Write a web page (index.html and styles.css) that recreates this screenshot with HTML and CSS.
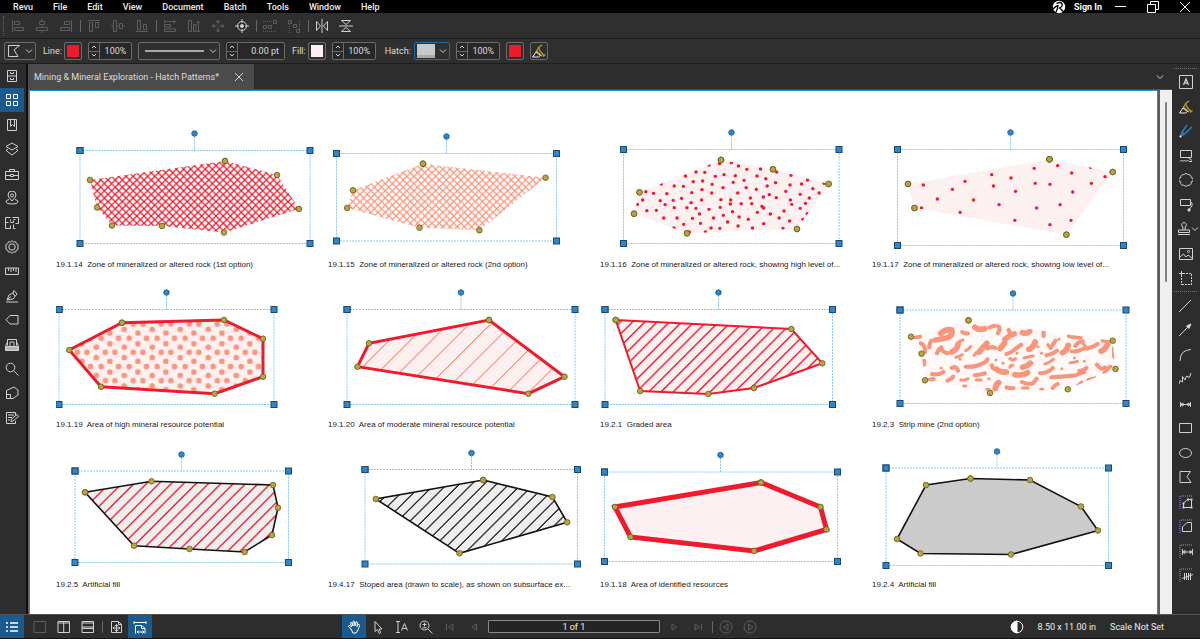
FILE: index.html
```html
<!DOCTYPE html>
<html lang="en">
<head>
<meta charset="utf-8">
<title>Mining &amp; Mineral Exploration - Hatch Patterns</title>
<link rel="stylesheet" href="styles.css">
</head>
<body>
<div class="app">
  <header class="titlebar">
    <nav class="menu">
      <button>Revu</button><button>File</button><button>Edit</button><button>View</button><button>Document</button><button>Batch</button><button>Tools</button><button>Window</button><button>Help</button>
    </nav>
    <div class="account">
      <svg class="logo" viewBox="0 0 14 14"><circle cx="7" cy="7" r="6.200" fill="#fff"/><path d="M3.500 13Q5.500 10 6 5.500Q4 6 1 9M4.500 3.500Q8 1.500 10 3.500Q11 6.500 7.500 8Q9 9 11.500 12" fill="none" stroke="#000" stroke-width="1.300"/></svg>
      <button class="signin">Sign In</button>
    </div>
    <div class="window-buttons">
      <button aria-label="Minimize"><svg class="icon" viewBox="0 0 14 14"><path d="M1 6.500H12"/></svg></button>
      <button aria-label="Restore"><svg class="icon" viewBox="0 0 14 14"><path d="M1.500 4.500h8v8h-8zM4.500 4.500v-3h8v8h-3"/></svg></button>
      <button aria-label="Close"><svg class="icon" viewBox="0 0 14 14"><path d="M2 2l10 10M12 2L2 12"/></svg></button>
    </div>
  </header>

  <div class="toolbar align-bar">
    <span class="grip"></span>
    <button class="tool dim" aria-label="Align left"><svg class="icon" viewBox="0 0 14 14"><path d="M1.500 1v12M3.500 2.500h5v3h-5zM3.500 8.500h9v3h-9z"/></svg></button>
    <button class="tool dim" aria-label="Align center"><svg class="icon" viewBox="0 0 14 14"><path d="M7 0v2.500M7 5.500v3M7 11.500V14M4.500 2.500h5v3h-5zM1.500 8.500h11v3h-11z"/></svg></button>
    <button class="tool dim" aria-label="Align right"><svg class="icon" viewBox="0 0 14 14"><path d="M12.500 1v12M5.500 2.500h5v3h-5zM1.500 8.500h9v3h-9z"/></svg></button>
    <span class="sep"></span>
    <button class="tool dim" aria-label="Align top"><svg class="icon" viewBox="0 0 14 14"><path d="M1 1.500h12M2.500 3.500h3v9h-3zM8.500 3.500h3v5h-3z"/></svg></button>
    <button class="tool dim" aria-label="Align middle"><svg class="icon" viewBox="0 0 14 14"><path d="M0 7h2.500M5.500 7h3M11.500 7H14M2.500 1.500h3v11h-3zM8.500 4.500h3v5h-3z"/></svg></button>
    <button class="tool dim" aria-label="Align bottom"><svg class="icon" viewBox="0 0 14 14"><path d="M1 12.500h12M2.500 1.500h3v9h-3zM8.500 5.500h3v5h-3z"/></svg></button>
    <span class="sep"></span>
    <button class="tool dim" aria-label="Match width"><svg class="icon" viewBox="0 0 14 14"><path d="M1.500 1v3M1.500 2.500h11M10.500 .500l2 2-2 2M1.500 5.500h6v2.500h-6zM1.500 10h11v2.500h-11z"/></svg></button>
    <button class="tool dim" aria-label="Match height"><svg class="icon" viewBox="0 0 14 14"><path d="M1.500 1.500h3v11h-3zM6.500 5.500h2.500v7h-2.500zM11.500 2v10.500M9.500 4l2-2 2 2M10 12.500h3"/></svg></button>
    <button class="tool dim" aria-label="Match size"><svg class="icon" viewBox="0 0 14 14"><path d="M7 1v4.500M7 8.500V13M1 7h4.500M8.500 7H13M5.500 3L7 1l1.500 2zM5.500 11L7 13l1.500-2zM3 5.500L1 7l2 1.500zM11 5.500L13 7l-2 1.500z"/></svg></button>
    <button class="tool" aria-label="Center in document"><svg class="icon" viewBox="0 0 14 14"><circle cx="7" cy="7" r="4.500"/><circle cx="7" cy="7" r="1.500" fill="#d0d0d0"/><path d="M7 0v4M7 10v4M0 7h4M10 7h4"/></svg></button>
    <span class="sep"></span>
    <button class="tool dim" aria-label="Distribute horizontally"><svg class="icon" viewBox="0 0 14 14"><path d="M0 2.500h9M0 12.500h14" stroke-dasharray="1 1"/><path d="M.5 6.500h3v3h-3zM5.500 6.500h3v3h-3zM10.500 1.500h3v3h-3z"/></svg></button>
    <button class="tool dim" aria-label="Distribute vertically"><svg class="icon" viewBox="0 0 14 14"><path d="M2.500 5v9M12.500 1v9" stroke-dasharray="1 1"/><path d="M1.500 1.500h3v3h-3zM6.500 5.500h3v3h-3zM9.500 10.500h3v3h-3z"/></svg></button>
    <span class="sep"></span>
    <button class="tool" aria-label="Flip horizontal"><svg class="icon" viewBox="0 0 14 14"><path d="M7 0v14M1.500 2.500L5.500 7l-4 4.500zM12.500 2.500L8.500 7l4 4.500z"/></svg></button>
    <button class="tool" aria-label="Flip vertical"><svg class="icon" viewBox="0 0 14 14"><path d="M0 7h14M2.500 1.500h9L7 5.500zM2.500 12.500h9L7 8.500z"/></svg></button>
  </div>

  <div class="toolbar props-bar">
    <button class="box shape-picker" aria-label="Shape" aria-haspopup="listbox"><svg class="icon" viewBox="0 0 14 14"><path d="M1.500 1.500h11L7 6l4 6.500H1.500z"/></svg><svg class="chev" viewBox="0 0 8 8"><path d="M1 2.500l3 3 3-3"/></svg></button>
    <div class="field"><span>Line:</span><button class="box swatch" aria-label="Line colour"><i class="red"></i></button></div>
    <div class="box spinner"><span class="steps"><button aria-label="Increase line opacity"><svg viewBox="0 0 8 8"><path d="M2 5l2-2 2 2"/></svg></button><button aria-label="Decrease line opacity"><svg viewBox="0 0 8 8"><path d="M2 3l2 2 2-2"/></svg></button></span><input aria-label="Line opacity" value="100%"></div>
    <div class="box line-style"><select aria-label="Line style"><option label=" " value="solid"></option></select><span class="rule"></span><svg class="chev" viewBox="0 0 8 8"><path d="M1 2.500l3 3 3-3"/></svg></div>
    <div class="box spinner wide"><span class="steps"><button aria-label="Increase width"><svg viewBox="0 0 8 8"><path d="M2 5l2-2 2 2"/></svg></button><button aria-label="Decrease width"><svg viewBox="0 0 8 8"><path d="M2 3l2 2 2-2"/></svg></button></span><input aria-label="Line width" value="0.00 pt"></div>
    <div class="field"><span>Fill:</span><button class="box swatch" aria-label="Fill colour"><i class="blush"></i></button></div>
    <div class="box spinner"><span class="steps"><button aria-label="Increase fill opacity"><svg viewBox="0 0 8 8"><path d="M2 5l2-2 2 2"/></svg></button><button aria-label="Decrease fill opacity"><svg viewBox="0 0 8 8"><path d="M2 3l2 2 2-2"/></svg></button></span><input aria-label="Fill opacity" value="100%"></div>
    <div class="field hatch-field"><span>Hatch:</span><button class="box hatch-picker" aria-label="Hatch pattern" aria-haspopup="listbox"><i></i><svg class="chev" viewBox="0 0 8 8"><path d="M1 2.500l3 3 3-3"/></svg></button></div>
    <div class="box spinner"><span class="steps"><button aria-label="Increase hatch opacity"><svg viewBox="0 0 8 8"><path d="M2 5l2-2 2 2"/></svg></button><button aria-label="Decrease hatch opacity"><svg viewBox="0 0 8 8"><path d="M2 3l2 2 2-2"/></svg></button></span><input aria-label="Hatch opacity" value="100%"></div>
    <button class="box swatch" aria-label="Hatch colour"><i class="red"></i></button>
    <button class="box swatch" aria-label="Highlight"><svg class="icon" viewBox="0 0 14 14"><path class="gold" d="M10 1L6.500 3.500 8 7l4 4.500M4 6.500l6 5.500M11 12.500l2.500-2M6.500 4L4 8"/><path class="pale" d="M4 8L.5 13h6l2-1.500z"/></svg></button>
  </div>

  <div class="workspace">
    <aside class="panels">
      <div class="strip panel-strip">
        <button class="tool" aria-label="File access"><svg class="icon" viewBox="0 0 14 14"><path d="M2.500 1.500h9v11h-9zM2.500 7h9M5.500 3v1.500h3V3M5.500 9v1.500h3V9"/></svg></button>
        <button class="tool active" aria-label="Thumbnails"><svg class="icon" viewBox="0 0 14 14"><path d="M1.500 1.500h4v4h-4zM8.500 1.500h4v4h-4zM1.500 8.500h4v4h-4zM8.500 8.500h4v4h-4z"/></svg></button>
        <button class="tool" aria-label="Bookmarks"><svg class="icon" viewBox="0 0 14 14"><path d="M2.500 1.500h9v11h-9zM5.500 1.500v7l2-2 2 2v-7"/></svg></button>
        <button class="tool" aria-label="Layers"><svg class="icon" viewBox="0 0 14 14"><path d="M7 1l6 3.500L7 8 1 4.500zM3 7L1 8.500 7 13l6-4.500L11 7"/></svg></button>
        <button class="tool" aria-label="Tool chest"><svg class="icon" viewBox="0 0 14 14"><path d="M.500 4.500h13v8H.500zM.500 8.500h5M8.500 8.500h5M5.500 7.500h3v2h-3zM4.500 4.500v-2h5v2"/></svg></button>
        <button class="tool" aria-label="Places"><svg class="icon" viewBox="0 0 14 14"><path d="M7 10Q3 6 3 4a4 4 0 0 1 8 0Q11 6 7 10zM4 8.500Q1 9 1 11q0 2 6 2t6-2q0-2-3-2.500"/><circle cx="7" cy="4.500" r="1.500"/></svg></button>
        <button class="tool" aria-label="Spaces"><svg class="icon" viewBox="0 0 14 14"><path d="M5.500 5.500v-2M5.500 1.500h-5v11h5v-3M.500 6.500h3M5.500 6.500h3v-2M7.500 1.500h6v6h-3M8.500 8.500v4h2M10.500 3.500h-2"/></svg></button>
        <button class="tool" aria-label="Properties"><svg class="icon" viewBox="0 0 14 14"><path d="M7 .7l1.600 1.300 2-.2.8 1.900 1.700 1L13 7l.1 2.200-1.700 1-.8 1.900-2-.1L7 13.300 5.400 12l-2 .1-.8-1.900-1.700-1L1 7 .9 4.700l1.700-1 .8-1.900 2 .2z"/><circle cx="7" cy="7" r="3.200"/></svg></button>
        <button class="tool" aria-label="Measurements"><svg class="icon" viewBox="0 0 14 14"><path d="M.5 4h13v6.500H.5zM3.500 4v3M6 4v4M8.500 4v3M11 4v4"/></svg></button>
        <button class="tool" aria-label="Signatures"><svg class="icon" viewBox="0 0 14 14"><path d="M1 13h12M2 11l2-5 4-2 2 3.500L8 10zM2 11l4-3.500M8 4l1-2.500L12 5l-2 2.500"/></svg></button>
        <button class="tool" aria-label="Flags"><svg class="icon" viewBox="0 0 14 14"><path d="M5 2.500h8v8.500H5L1 6.800z"/></svg></button>
        <button class="tool" aria-label="Studio"><svg class="icon" viewBox="0 0 14 14"><path d="M2.500 7.500v-6h9v6M.500 8.500h13v4H.500zM.500 8l2-4M13.500 8l-2-4M5 8V4h4v4"/><path d="M1 9h12v3H1z" fill="#aaa"/></svg></button>
        <button class="tool" aria-label="Search"><svg class="icon" viewBox="0 0 14 14"><circle cx="5.500" cy="5.500" r="4.300"/><path d="M8.700 8.700L13.500 13.500"/></svg></button>
        <button class="tool" aria-label="Sketch"><svg class="icon" viewBox="0 0 14 14"><path d="M1.500 4.500L9 1l4 3v5l-5 3.500H1.500zM1.500 8.500h4v4"/></svg></button>
        <button class="tool" aria-label="Markups"><svg class="icon" viewBox="0 0 14 14"><path d="M10.500 4V1.500h-9v11h9V10M3 4h6M3 6.500h4M3 9h2M6 10.500l.5-2.500 5.500-4.500 1.500 2L8 10z"/></svg></button>
      </div>
    </aside>

    <main class="document">
      <div class="tabs">
        <div class="tab"><button class="tab-name">Mining &amp; Mineral Exploration - Hatch Patterns*</button><button class="tab-close" aria-label="Close tab"><svg class="icon" viewBox="0 0 14 14"><path d="M3 3l8 8M11 3l-8 8"/></svg></button></div>
        <button class="tab-more" aria-label="More tabs"><svg class="chev" viewBox="0 0 8 8"><path d="M1 2.500l3 3 3-3"/></svg></button>
      </div>
      <div class="viewer">
        <div class="page">
          <svg class="defs" aria-hidden="true">
            <defs>
              <marker id="corner" markerUnits="userSpaceOnUse" markerWidth="8" markerHeight="8" refX="4" refY="4" viewBox="0 0 8 8"><rect x="1" y="1" width="6" height="6" fill="#2f86c9" stroke="#1b4870"/></marker>
              <marker id="turn" markerUnits="userSpaceOnUse" markerWidth="8" markerHeight="8" refX="4" refY="4" viewBox="0 0 8 8"><circle cx="4" cy="4" r="2.800" fill="#2f86c9" stroke="#225a8a" stroke-width=".8"/></marker>
              <marker id="vertex" markerUnits="userSpaceOnUse" markerWidth="8" markerHeight="8" refX="4" refY="4" viewBox="0 0 8 8"><circle cx="4" cy="4" r="2.800" fill="#b5a642" stroke="#6d6425" stroke-width=".9"/></marker>
              <pattern id="cross-red" x="0" y="0" width="7.200" height="7.200" patternUnits="userSpaceOnUse"><path d="M-1-1l9.200 9.200M-1 8.200L8.200-1" stroke="#ee1b2d" stroke-width="1.300"/></pattern>
              <pattern id="cross-salmon" x="0" y="0" width="7.200" height="7.200" patternUnits="userSpaceOnUse"><path d="M-1-1l9.200 9.200M-1 8.200L8.200-1" stroke="#f8957d" stroke-width="1.300"/></pattern>
              <pattern id="rings" x="130.300" y="321" width="28" height="28.300" patternUnits="userSpaceOnUse"><path d="M3 3h0M12.600 3h0M22 8.300h0M7.600 12h0M16.200 17.300h0M27 17.300h0M-1 17.300h0M7.600 22.700h0M22 26.300h0M22-2h0" stroke="#f8957d" stroke-width="5.600" stroke-linecap="round"/></pattern>
              <pattern id="slant-wide" x="740" y="0" width="21.300" height="40" patternUnits="userSpaceOnUse" patternTransform="skewX(-45)"><rect x="10" width="1.600" height="40" fill="#f8957d"/></pattern>
              <pattern id="slant-red" x="949.500" y="0" width="12.300" height="40" patternUnits="userSpaceOnUse" patternTransform="skewX(-45)"><rect x="5" width="2" height="40" fill="#ee1b2d"/></pattern>
              <pattern id="slant-fill" x="649" y="0" width="12.400" height="40" patternUnits="userSpaceOnUse" patternTransform="skewX(-45)"><rect x="5" width="1.900" height="40" fill="#ee1b2d"/></pattern>
              <pattern id="slant-black" x="975" y="0" width="12.400" height="40" patternUnits="userSpaceOnUse" patternTransform="skewX(-45)"><rect x="5" width="1.600" height="40" fill="#111"/></pattern>
              <clipPath id="clip-high"><path d="M722 160L774 169.300 829.600 184 798 229 688 233.300 635 213.700 640.500 192.300z"/></clipPath>
              <clipPath id="clip-low"><path d="M1050.500 159.300L1113.700 172 1067.400 234.700 915.500 208 909 184z"/></clipPath>
              <clipPath id="clip-strip"><path d="M969.500 320.300L1113.700 340.700 1116.500 369 1068.800 389.300 991 393 926 380.300 922.500 353.700 912 336.700z"/></clipPath>
            </defs>
          </svg>
          <div class="sheet">
            <figure>
              <svg viewBox="56 120 272 134">
                <path class="area" fill="url(#cross-red)" d="M225 161L277 175 299 209 224 232.500 162 226 112 225.500 97 207.500 90 180z"/>
                <path class="stem" d="M194.500 133.500V150.500"/><path class="frame" d="M80 150.500H310V243.500H80z"/>
              </svg>
              <figcaption>19.1.14&nbsp; Zone of mineralized or altered rock (1st option)</figcaption>
            </figure>
            <figure>
              <svg viewBox="328 120 272 134">
                <path class="area" fill="url(#cross-salmon)" d="M423 163.700L545.600 177.700 479.400 230.300 419.500 227.700 347.200 208 353 190.300z"/>
                <path class="stem" d="M446.500 136.500V153.500"/><path class="frame" d="M336.500 153.500H556.500V241H336.500z"/>
              </svg>
              <figcaption>19.1.15&nbsp; Zone of mineralized or altered rock (2nd option)</figcaption>
            </figure>
            <figure>
              <svg viewBox="601 120 272 134">
                <path class="area blush" d="M722 160L774 169.300 829.600 184 798 229 688 233.300 635 213.700 640.500 192.300z"/>
                <g clip-path="url(#clip-high)"><path class="dots" transform="translate(590 120) scale(.3508 .3333)" d="M342 135h0M372 131h0M406 128h0M426 138h0M450 148h0M489 147h0M535 156h0M576 166h0M305 156h0M330 157h0M275 168h0M360 169h0M385 164h0M417 167h0M479 168h0M504 176h0M532 188h0M573 195h0M606 192h0M623 180h0M670 190h0M638 206h0M656 219h0M206 192h0M243 198h0M269 199h0M297 185h0M324 183h0M351 193h0M382 203h0M411 187h0M442 181h0M448 203h0M477 208h0M508 198h0M561 214h0M162 215h0M184 220h0M222 221h0M293 218h0M322 209h0M350 219h0M424 219h0M514 224h0M534 233h0M497 231h0M602 223h0M628 234h0M574 240h0M153 240h0M203 242h0M240 241h0M264 235h0M291 248h0M321 240h0M376 239h0M404 240h0M460 234h0M138 253h0M217 254h0M243 263h0M279 263h0M305 265h0M342 268h0M374 262h0M403 252h0M434 251h0M464 251h0M493 259h0M498 264h0M578 253h0M617 250h0M602 265h0M165 272h0M192 271h0M315 282h0M409 275h0M383 286h0M480 277h0M517 282h0M556 273h0M542 294h0M213 294h0M251 294h0M295 295h0M355 294h0M428 291h0M454 298h0M572 303h0M610 298h0M622 281h0M270 313h0M318 310h0M395 306h0M425 318h0M498 311h0M242 324h0M348 324h0M373 325h0M466 324h0M553 325h0M332 336h0M286 336h0"/></g>
                <path class="area" d="M722 160L774 169.300 829.600 184 798 229 688 233.300 635 213.700 640.500 192.300z"/>
                <path class="stem" d="M732.500 132.500V149.500"/><path class="frame" d="M624.500 149.500H840V243.500H624.500z"/>
              </svg>
              <figcaption>19.1.16&nbsp; Zone of mineralized or altered rock, showing high level of...</figcaption>
            </figure>
            <figure>
              <svg viewBox="873 120 272 134">
                <path class="area blush" d="M1050.500 159.300L1113.700 172 1067.400 234.700 915.500 208 909 184z"/>
                <g clip-path="url(#clip-low)"><path class="dots" transform="translate(590 120) scale(.3508 .3333)" d="M953 195h0M948 264h0M993 237h0M1036 208h0M1072 184h0M1058 277h0M1096 240h0M1148 164h0M1153 198h0M1203 174h0M1169 254h0M1216 214h0M1214 301h0M1269 145h0M1272 190h0M1314 193h0M1276 264h0M1314 314h0M1336 137h0M1376 159h0M1379 216h0M1343 254h0M1374 301h0M1432 190h0M1430 142h0M1471 170h0"/></g>
                <path class="area" d="M1050.500 159.300L1113.700 172 1067.400 234.700 915.500 208 909 184z"/>
                <path class="stem" d="M1011.500 132.500V149.500"/><path class="frame" d="M898.500 149.500H1124.500V245.500H898.500z"/>
              </svg>
              <figcaption>19.1.17&nbsp; Zone of mineralized or altered rock, showing low level of...</figcaption>
            </figure>

            <figure>
              <svg viewBox="56 280 272 134">
                <path fill="#fdf0f1" d="M122 322.700L224 320 263 338.700 263 376.700 214.600 393.700 101 386.700 69.300 350z"/>
                <path class="area outline-3" fill="url(#rings)" d="M122 322.700L224 320 263 338.700 263 376.700 214.600 393.700 101 386.700 69.300 350z"/>
                <path class="stem" d="M166.500 292.500V309.500"/><path class="frame" d="M59 309.500H274V404.500H59z"/>
              </svg>
              <figcaption>19.1.19&nbsp; Area of high mineral resource potential</figcaption>
            </figure>
            <figure>
              <svg viewBox="328 280 272 134">
                <path fill="#fdf0f1" d="M489 320L564.500 376.700 528.300 393.700 357.500 366.700 369 343.300z"/>
                <path class="area outline-3" fill="url(#slant-wide)" d="M489 320L564.500 376.700 528.300 393.700 357.500 366.700 369 343.300z"/>
                <path class="stem" d="M461 292.500V309.500"/><path class="frame" d="M347 309.500H575V404.500H347z"/>
              </svg>
              <figcaption>19.1.20&nbsp; Area of moderate mineral resource potential</figcaption>
            </figure>
            <figure>
              <svg viewBox="601 280 272 134">
                <path fill="#fdf0f1" d="M616.700 320L792.400 329 823.300 363.300 755 388 709.300 394 641.200 391z"/>
                <path class="area outline-2" fill="url(#slant-red)" d="M616.700 320L792.400 329 823.300 363.300 755 388 709.300 394 641.200 391z"/>
                <path class="stem" d="M719.500 292.500V309.500"/><path class="frame" d="M606 309.500H833.500V404.500H606z"/>
              </svg>
              <figcaption>19.2.1&nbsp; Graded area</figcaption>
            </figure>
            <figure>
              <svg viewBox="873 280 272 134">
                <path fill="#fef8f7" d="M969.500 320.300L1113.700 340.700 1116.500 369 1068.800 389.300 991 393 926 380.300 922.500 353.700 912 336.700z"/>
                <g clip-path="url(#clip-strip)"><g class="blobs" transform="translate(590 280) scale(.3508 .3333)">
                  <path stroke-width="17" d="M1003 160Q1020 145 1034 150Q1038 168 1020 174L988 180M1100 142q12 10 28 4M1112 216l22-26M1186 178q16-14 26-16M1172 206l12-16M1236 158q14 4 20-4M1254 208q14-6 18-22M1350 218q14-8 16-22M1034 216q16-6 18-24M1460 214q12-6 18-20M1158 326q2-14 10-18M1214 284q24 4 36-6M1162 268q12 10 28 8M1236 262q14-4 22-12"/>
                  <path stroke-width="12" d="M930 172l14-2M946 190q12 4 12 26M976 182q-6 8-6 20M992 220q2-10 12-18 0 14 18 18M1064 156q8 6 16 4M1142 142l18-6M1164 136q12 6 2 24M1136 206q12-8 22-2M1190 222q14-4 24-14l18-14M1196 150l6 14M1296 154v14M1304 226q20-4 30-14M1316 204q6-10 14-22M1368 168q20 6 34 4M1376 214q18 2 34-8 20 0 40-14M1386 198q10-14 22-14M1464 182l26 0M1497 204v26M955 242v12M1074 260q28 2 44-8 14-4 18-14M978 282q20 4 32-6M1034 264q14-8 18 8M1100 286q20-2 28-6M1148 256q2 8 6 10M1286 280q24-2 36-16M1318 292q40-2 70-6 16-8 24-10M1398 272q10 2 20-8M1448 254q14 20 22 8M1486 260q-10 8-16 18M968 300l14-3M1022 302q12-4 16-12M1234 306q16 8 32 4l10-14M1190 322q10 4 20 2M1322 324q4-8 14-12M1394 318l10-10M1424 300l18-5"/>
                  <path stroke-width="9" d="M1056 184l10-4M1074 212q8-4 14-12M1098 226l6-8M1046 232q12-2 18-8M1240 234q16-4 26-6M1300 252q12-4 24-14M1372 248q10 0 20-4M1200 236q8 8 16 0M1060 300q14 2 20-4M1104 300h14M1200 262q2-8 8-6M1058 238h0M1160 240h0M1180 250h0M1220 220h0M1290 220h0M1384 234h0M1348 266h0M1412 244h0M1004 264h0M1140 296h0M1340 178h0M1280 200h0M1134 328h6M1236 324h16M1288 328h6M1068 318h6M1308 194l4 6M1408 190q8 6 6 16"/>
                </g></g>
                <path class="area" d="M969.500 320.300L1113.700 340.700 1116.500 369 1068.800 389.300 991 393 926 380.300 922.500 353.700 912 336.700z"/>
                <path class="stem" d="M1014 293.500V310"/><path class="frame" d="M901 310H1127V403.500H901z"/>
              </svg>
              <figcaption>19.2.3&nbsp; Strip mine (2nd option)</figcaption>
            </figure>

            <figure>
              <svg viewBox="56 440 272 134">
                <path fill="#eee" d="M85 492.300L151.600 481.300 273 485 278 507.700 272 535 244.600 552 189.500 549 134 545.700z"/>
                <path class="area outline-black" fill="url(#slant-fill)" d="M85 492.300L151.600 481.300 273 485 278 507.700 272 535 244.600 552 189.500 549 134 545.700z"/>
                <path class="stem" d="M181.500 454.500V471"/><path class="frame" d="M75 471H288.500V562.500H75z"/>
              </svg>
              <figcaption>19.2.5&nbsp; Artificial fill</figcaption>
            </figure>
            <figure>
              <svg viewBox="328 440 272 134">
                <path fill="#eee" d="M483.200 480L552.400 497 567.200 522.300 459.500 553.300 375.800 499z"/>
                <path class="area outline-black" fill="url(#slant-black)" d="M483.200 480L552.400 497 567.200 522.300 459.500 553.300 375.800 499z"/>
                <path class="stem" d="M471.500 453V469.500"/><path class="frame" d="M365 469.500H577.500V564H365z"/>
              </svg>
              <figcaption>19.4.17&nbsp; Stoped area (drawn to scale), as shown on subsurface ex...</figcaption>
            </figure>
            <figure>
              <svg viewBox="601 440 272 134">
                <path class="area blush outline-5" d="M762 482.500L821.500 507 827.500 529.500 755 551 631.500 537 616 507z"/>
                <path class="stem" d="M721.500 455V472"/><path class="frame" d="M605.500 472H838.500V561.500H605.500z"/>
              </svg>
              <figcaption>19.1.18&nbsp; Area of identified resources</figcaption>
            </figure>
            <figure>
              <svg viewBox="873 440 272 134">
                <path class="area outline-black" fill="#cbcbcb" d="M971.500 478.500L1031 480 1082 506.500 1099 530.500 1012 554.500 921.500 553.500 898 539 927 485z"/>
                <path class="stem" d="M998 451.500V468"/><path class="frame" d="M887 468H1109.500V565.500H887z"/>
              </svg>
              <figcaption>19.2.4&nbsp; Artificial fill</figcaption>
            </figure>
          </div>
        </div>
        <div class="scroll"><span></span></div>
      </div>
    </main>

    <aside class="tools">
      <span class="rail"></span>
      <div class="strip markup-strip">
        <button class="tool" aria-label="Text box"><svg class="icon" viewBox="0 0 14 14"><path d="M.500.500h13v13H.500z"/><path d="M4.500 10L7 4l2.500 6M5.500 8.200h3" stroke-width="1.300"/></svg></button>
        <button class="tool" aria-label="Highlighter"><svg class="icon" viewBox="0 0 14 14"><path class="gold" d="M10 1L6.500 3.500 8 7l4 4.500M4 6.500l6 5.500M11 12.500l2.500-2M6.500 4L4 8"/><path class="pale" d="M4 8L.5 13h6l2-1.500z"/></svg></button>
        <button class="tool" aria-label="Pen"><svg class="icon" viewBox="0 0 14 14"><path class="blue" d="M8 1L3 8l-1.500 4L5 10.500 13 3M3 8l2.500 2.500"/><circle cx="1.500" cy="12.500" r="1" fill="#fff" stroke="none"/></svg></button>
        <button class="tool" aria-label="Note"><svg class="icon" viewBox="0 0 14 14"><path d="M1.500 1.500h11v7h-11zM9 8.500l4 3M1 12.500l1.500-1.500L4 12.500 5.500 11 7 12.500 8.500 11l1.500 1.500h3"/></svg></button>
        <button class="tool" aria-label="Cloud"><svg class="icon" viewBox="0 0 14 14"><path d="M5 1.800a2.200 2.200 0 0 1 4 0a2.200 2.200 0 0 1 3 2.700a2.200 2.200 0 0 1 0 4.500a2.200 2.200 0 0 1-3 3a2.200 2.200 0 0 1-4 0a2.200 2.200 0 0 1-3-3a2.200 2.200 0 0 1 0-4.500a2.200 2.200 0 0 1 3-2.700z"/></svg></button>
        <button class="tool" aria-label="Callout"><svg class="icon" viewBox="0 0 14 14"><path d="M1.500 1.500h10v6h-10zM11.500 4l1.500 1v3l-2.500 3"/><circle cx="10" cy="12" r="1.200" fill="#ddd"/></svg></button>
        <button class="tool stamp" aria-label="Stamp"><svg class="icon" viewBox="0 0 14 14"><path d="M1 12.500h12M1.500 10.500v-2.500h11v2.500zM5.500 8Q7 6 5 4a2.300 2.300 0 1 1 4 0Q7 6 8.500 8"/></svg><svg class="chev" viewBox="0 0 8 8"><path d="M1 2.500l3 3 3-3"/></svg></button>
        <button class="tool" aria-label="Image"><svg class="icon" viewBox="0 0 14 14"><path d="M.500 1.500h13v11H.500zM1 10l3.500-3 2.500 3 2-2 4 3"/><circle cx="9.500" cy="4.500" r="1"/></svg></button>
        <button class="tool" aria-label="Snapshot"><svg class="icon" viewBox="0 0 14 14"><path d="M0 2.500h6M2.500 0v6"/><path d="M3 13.500h10M12.500 3v10M7 2.500h6M2.500 7v7" stroke-dasharray="2 1"/></svg></button>
      </div>
      <span class="rail"></span>
      <div class="strip shape-strip">
        <button class="tool" aria-label="Line"><svg class="icon" viewBox="0 0 14 14"><path d="M0 13L12 1"/></svg></button>
        <button class="tool" aria-label="Arrow"><svg class="icon" viewBox="0 0 14 14"><path d="M0 13L9 4"/><path d="M12 1L7.500 3l2.500 2.500z" fill="#ddd"/></svg></button>
        <button class="tool" aria-label="Arc"><svg class="icon" viewBox="0 0 14 14"><path d="M1 13Q1 2 12 1.500"/></svg></button>
        <button class="tool" aria-label="Polyline"><svg class="icon" viewBox="0 0 14 14"><path d="M0 12l1-3.500 2.500 1.500V4.500L6 8l1.500-4 3 1.500L12 1"/></svg></button>
        <button class="tool" aria-label="Dimension"><svg class="icon" viewBox="0 0 14 14"><path d="M1.500 7.500h10M1.500 5v5M11.500 5v5M4 6L1.500 7.500 4 9zM9 6l2.500 1.500L9 9z"/></svg></button>
        <button class="tool" aria-label="Rectangle"><svg class="icon" viewBox="0 0 14 14"><path d="M.5 2.500h12v9H.500z"/></svg></button>
        <button class="tool" aria-label="Ellipse"><svg class="icon" viewBox="0 0 14 14"><ellipse cx="6.500" cy="7" rx="6" ry="4.500"/></svg></button>
        <button class="tool" aria-label="Polygon"><svg class="icon" viewBox="0 0 14 14"><path d="M1 1.500h10.500L8 6.500l4 6H1z"/></svg></button>
        <button class="tool" aria-label="Area measure"><svg class="icon" viewBox="0 0 14 14"><path class="violet" d="M1 14V1h13" stroke-width="2" stroke-dasharray="1 1"/><path d="M4.500 12.500V8L9 4.500h3.500v8z"/><path d="M3.500 12.500h2M8 4.500h2M11.500 4.500h2M11.500 12.500h2M3.500 8.500h2" stroke-width="2"/></svg></button>
        <button class="tool" aria-label="Perimeter measure"><svg class="icon" viewBox="0 0 14 14"><path class="violet" d="M1 14V1h13" stroke-width="2" stroke-dasharray="1 1"/><path d="M3.500 12.500V8l4.500-4.500h4.500v9z"/></svg></button>
        <button class="tool" aria-label="Length measure"><svg class="icon" viewBox="0 0 14 14"><path class="violet" d="M1 14V1h13" stroke-width="2" stroke-dasharray="1 1"/><path d="M3.500 8h10M3.500 5v6M13.500 5v6M6 6.500L4 8l2 1.500zM11 6.500L13 8l-2 1.500z"/></svg></button>
        <button class="tool" aria-label="Count"><svg class="icon" viewBox="0 0 14 14"><path class="violet" d="M1 14V1h13" stroke-width="2" stroke-dasharray="1 1"/><path d="M5.500 5v7M7.500 5v7M9.500 5v7M11.500 5v7M3 10.500l11-4"/></svg></button>
      </div>
    </aside>
  </div>

  <footer class="statusbar">
    <button class="tool active" aria-label="Markups list"><svg class="icon" viewBox="0 0 14 14"><path d="M1 3h2M1 7h2M1 11h2M5 3h8M5 7h8M5 11h8" stroke-width="1.500"/></svg></button>
    <div class="group views">
      <button class="tool dim" aria-label="Single view"><svg class="icon" viewBox="0 0 14 14"><path d="M1 1.500h11.500v11H1z"/></svg></button>
      <button class="tool" aria-label="Split vertical"><svg class="icon" viewBox="0 0 14 14"><path d="M1 1.500h11.500v11H1zM6.700 1v12M1 3h11"/></svg></button>
      <button class="tool" aria-label="Split horizontal"><svg class="icon" viewBox="0 0 14 14"><path d="M1 1.500h11.500v11H1zM1 7h11.500M1 3h11M1 8.500h11"/></svg></button>
      <span class="sep"></span>
      <button class="tool" aria-label="Fit page"><svg class="icon" viewBox="0 0 14 14"><path d="M9.500 1.500h-7v11h10v-8zM9.500 1.500v3h3M7.500 4.500v7M4 8h7M6 6l1.500-1.500L9 6M6 10l1.500 1.500L9 10M5.500 6.500L4 8l1.500 1.500M9.500 6.500L11 8 9.500 9.500"/></svg></button>
      <button class="tool active" aria-label="Fit width"><svg class="icon" viewBox="0 0 14 14"><path d="M1 2.500h12M1 1v3M13 1v3M2.500 13.500V5.500H9l3 3v5M4 12h7M5.500 10.500L4 12l1.500 1.500M9.500 10.500L11 12l-1.500 1.500M8.500 5.500v3H12"/></svg></button>
    </div>
    <span class="space-a"></span>
    <div class="group">
      <button class="tool active" aria-label="Pan"><svg class="icon" viewBox="0 0 14 14"><path d="M4 9L1.500 6.500Q1.500 5 3 5.500L4.500 7 3.500 3Q4 1.800 5 2.800L6 6 6 1.500Q7 .500 7.500 1.500L8 6 9 2Q10 1.300 10.500 2.500L10 6.500 11 4.500Q12.500 4 12.500 5.500L11 10 9 13H6z"/></svg></button>
      <button class="tool" aria-label="Select"><svg class="icon" viewBox="0 0 14 14"><path d="M4 1.500v10l2.500-2 1.700 4 1.500-.8L8.200 9H11z"/></svg></button>
      <button class="tool" aria-label="Select text"><svg class="icon" viewBox="0 0 14 14"><path d="M1 1.500h4M3 1.500v11M1 12.500h4M6.500 10.500l3-7 3 7M7.500 8.500h4"/></svg></button>
      <button class="tool" aria-label="Zoom"><svg class="icon" viewBox="0 0 14 14"><circle cx="5.500" cy="5.500" r="4.500"/><path d="M9 9l4.500 4.500M5.500 2.500v4M3.500 4.500h4M3.500 7.800h4"/></svg></button>
      <button class="tool dim" aria-label="First page"><svg class="icon" viewBox="0 0 14 14"><path d="M3.500 3.500v7M10 4L5.500 7l4.500 3z"/></svg></button>
      <button class="tool dim" aria-label="Previous page"><svg class="icon" viewBox="0 0 14 14"><path d="M9.500 4L5 7l4.500 3z"/></svg></button>
      <input class="page-number" aria-label="Page" value="1 of 1">
      <button class="tool dim" aria-label="Next page"><svg class="icon" viewBox="0 0 14 14"><path d="M5 4l4.500 3L5 10z"/></svg></button>
      <button class="tool dim" aria-label="Last page"><svg class="icon" viewBox="0 0 14 14"><path d="M10.500 3.500v7M4 4l4.500 3L4 10z"/></svg></button>
      <span class="sep"></span>
      <button class="tool dim" aria-label="Previous view"><svg class="icon" viewBox="0 0 14 14"><circle cx="7" cy="7" r="6"/><path d="M9 4L4.500 7 9 10z"/></svg></button>
      <button class="tool dim" aria-label="Next view"><svg class="icon" viewBox="0 0 14 14"><circle cx="7" cy="7" r="6"/><path d="M5.500 4L10 7l-4.500 3z"/></svg></button>
    </div>
    <span class="space-b"></span>
    <div class="group facts">
      <button class="contrast" aria-label="Dimmer"><svg class="icon" viewBox="0 0 14 14"><circle cx="7" cy="7" r="5.800"/><path d="M7 1.200a5.800 5.800 0 0 0 0 11.600z" fill="#fff"/></svg></button>
      <span>8.50 x 11.00 in</span><span>Scale Not Set</span>
    </div>
  </footer>
</div>
</body>
</html>
```
FILE: styles.css
```css
* { box-sizing: border-box; }
body { margin: 0; background: #2d2d2d; color: #ddd; font: 9px/12px Roboto, "Liberation Sans", sans-serif; }
button, input, select { font: inherit; color: inherit; background: none; border: 0; margin: 0; padding: 0; }
button { display: flex; align-items: center; justify-content: center; }
svg { display: block; flex: none; }
.app { height: 100vh; display: flex; flex-direction: column; overflow: hidden; }
.icon { width: 14px; height: 14px; fill: none; stroke: #d0d0d0; stroke-width: 1; }
.chev { width: 8px; height: 8px; fill: none; stroke: #d0d0d0; stroke-width: 1; }
.dim .icon { stroke: #5e5e5e; }
.gold { stroke: #b99a2e; stroke-width: 1.3; }
.pale { stroke: #eee; }
.blue { stroke: #2f86c9; stroke-width: 1.3; }
.violet { stroke: #70559e; }
.tool { width: 24px; height: 24px; flex: none; }
.active { background: #1a5a8c; }
.active .icon { stroke: #fff; }
.sep { width: 4px; flex: none; height: 12px; background: linear-gradient(#666, #666) 2px 0 / 1px 100% no-repeat; }

/* Title bar */
.titlebar { flex: none; height: 13px; background: #000; display: flex; align-items: center; color: #eee; font-weight: 500; }
.menu { display: flex; gap: 20px; padding-left: 13px; flex: 1; }
.account { display: flex; align-items: center; gap: 8px; margin-right: 14px; }
.logo { width: 14px; height: 14px; }
.signin { font-weight: 700; color: #fff; }
.window-buttons { display: flex; gap: 18px; padding-right: 8px; }
.account + .window-buttons { margin-left: -2px; }
.window-buttons .icon { stroke: #fff; }

/* Toolbars */
.toolbar { flex: none; display: flex; align-items: center; background: #2f2f2f; }
.align-bar { height: 26px; border-bottom: 1px solid #191919; padding-left: 3px; }
.grip { width: 3px; height: 20px; border-left: 1px dotted #666; }
.props-bar { height: 25px; border-bottom: 1px solid #1d1d1d; padding-left: 4px; gap: 6px; }
.box { height: 18px; border: 1px solid #6b6b6b; border-radius: 2px; flex: none; }
.shape-picker { width: 32px; gap: 4px; }
.field { display: flex; align-items: center; gap: 2px; padding-left: 1px; }
.swatch { width: 18px; }
.swatch i { width: 12px; height: 12px; }
.red { background: #ee1b2d; }
i.blush { background: #fdf0f1; }
.spinner { display: flex; width: 44px; background: #282828; }
.spinner.wide { width: 59px; }
.spinner input { flex: 1; min-width: 0; text-align: center; }
.spinner.wide input { text-align: right; padding-right: 5px; }
.steps { width: 11px; flex: none; border-right: 1px solid #6b6b6b; display: flex; flex-direction: column; }
.steps button { flex: 1; min-height: 0; }
.steps button + button { border-top: 1px solid #6b6b6b; }
.steps svg { width: 8px; height: 8px; fill: none; stroke: #d0d0d0; }
.line-style { position: relative; width: 82px; display: flex; align-items: center; gap: 5px; padding: 0 2px 0 6px; }
.line-style select { position: absolute; inset: 0; width: 100%; appearance: none; }
.rule { flex: 1; height: 2px; background: #a8a8a8; }
.hatch-field { padding-left: 3px; gap: 3px; }
.hatch-picker { width: 36px; gap: 4px; border-color: #1f6aa5; }
.hatch-picker i { width: 18px; height: 14px; background: #c8c8c8; border-bottom: 3px solid #aaa; }

/* Workspace */
.workspace { flex: 1; min-height: 0; display: flex; }
.strip { display: flex; flex-direction: column; justify-content: space-between; }
.panels { width: 28px; flex: none; background: #2d2d2d; border-right: 2px solid #0e0e0e; }
.panel-strip { height: 366px; }
.tools { width: 28px; flex: none; padding-top: 4px; background: #2d2d2d; }
.tools .strip { padding-left: 2px; }
.markup-strip { height: 220px; margin-bottom: 1px; }
.shape-strip { height: 293px; margin-top: 2px; }
.rail { display: block; height: 1px; margin: 0 3px 1px 2px; border-top: 1px dotted #777; }
.stamp { justify-content: flex-start; padding-left: 3px; }
.document { flex: 1; min-width: 0; display: flex; flex-direction: column; }
.tabs { height: 26px; flex: none; display: flex; justify-content: space-between; background: #2d2d2d; border-bottom: 1px solid #4f4b49; }
.tab { display: flex; align-items: center; padding: 0 8px 0 6px; gap: 13px; background: #4b4b4b; }
.tab-more { width: 24px; }
.viewer { flex: 1; min-height: 0; display: flex; background: #5c5c5c; padding-left: 1px; }
.page { flex: 1; min-width: 0; margin-right: 2px; background: #fff; border: 1px solid #2f86c9; border-width: 1px 1px 0; color: #222; font: 8px/12px "Liberation Sans", Arial, sans-serif; }
.defs { position: absolute; width: 0; height: 0; }
.sheet { display: grid; grid-template-columns: repeat(4, minmax(0, 1fr)); row-gap: 14px; padding: 29px 13px 0 26px; }
figure { margin: 0; }
figure svg { width: 100%; height: auto; }
figcaption { height: 12px; margin-top: 5px; white-space: nowrap; margin-bottom: -5px; }
.sheet .area { marker: url(#vertex); }
.area:not([fill]) { fill: none; }
.area.blush { fill: #fdf0f1; }
.outline-2 { stroke: #ee1b2d; stroke-width: 2; }
.outline-3 { stroke: #ee1b2d; stroke-width: 3; }
.outline-5 { stroke: #ee1b2d; stroke-width: 5; }
.outline-black { stroke: #111; stroke-width: 1.6; }
.dots { stroke: #ee1b2d; stroke-width: 10; stroke-linecap: round; }
.blobs { fill: none; stroke: #f8957d; stroke-linecap: round; stroke-linejoin: round; }
.stem, .frame { fill: none; stroke: #8cc8f0; stroke-width: 1; stroke-dasharray: 2 1; }
.stem { marker-start: url(#turn); }
.frame { marker: url(#corner); }
.scroll { width: 12px; flex: none; background: #efefef; padding: 12px 5px 0; }
.scroll span { display: block; height: 180px; width: 2px; background: #808080; border-radius: 1px; }

/* Status bar */
.statusbar { flex: none; height: 25px; display: flex; align-items: center; background: #2d2d2d; border: solid #555; border-width: 1px 0; border-bottom-color: #111; color: #eee; }
.statusbar .tool { height: 23px; }
.group { display: flex; align-items: center; }
.views { padding-left: 4px; }
.space-a { flex: 187; }
.space-b { flex: 244; }
.page-number { width: 172px; height: 13px; margin: 0 2px; border: 1px solid #888; border-radius: 1px; background: #242424; text-align: center; }
.facts { gap: 14px; padding-right: 36px; }
.contrast .icon { stroke: #fff; }
```
